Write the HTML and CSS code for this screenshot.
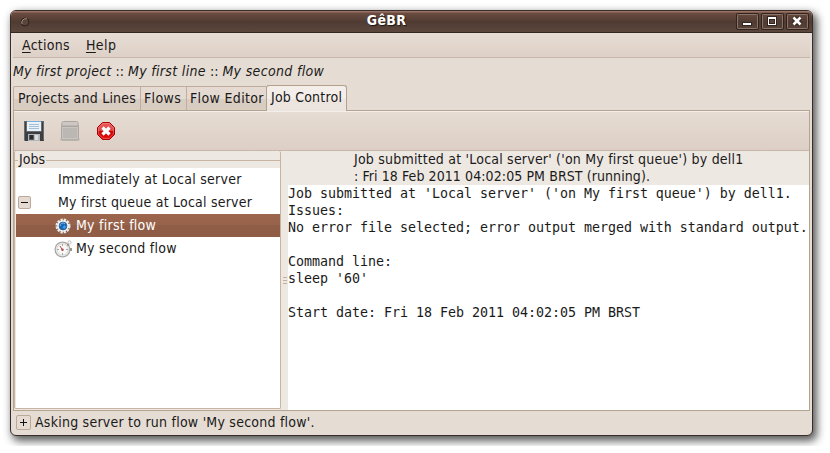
FILE: index.html
```
<!DOCTYPE html>
<html lang="en">
<head>
<meta charset="utf-8">
<title>GêBR</title>
<link rel="stylesheet" href="styles.css">
</head>
<body>
<div class="window">
  <header class="titlebar">
    <svg class="window-menu" width="10" height="10" viewBox="0 0 10 10"><circle cx="5" cy="5" r="4" fill="#5b453b" stroke="#2d211c"/><path d="M2 7A4 4 0 0 1 7 1.8" fill="none" stroke="#a58c80"/></svg>
    <span class="title">GêBR</span>
    <div class="window-buttons">
      <svg width="23" height="17" viewBox="0 0 23 17"><rect x=".5" y=".5" width="22" height="16" rx="1" fill="none" stroke="#30231e"/><rect x="1.5" y="1.5" width="20" height="14" rx="1" fill="none" stroke="#8b746a"/><path d="M6 9h10v4H6z" fill="#33251f"/><path d="M7 10h8v2H7z" fill="#fff"/></svg>
      <svg width="23" height="17" viewBox="0 0 23 17"><rect x=".5" y=".5" width="22" height="16" rx="1" fill="none" stroke="#30231e"/><rect x="1.5" y="1.5" width="20" height="14" rx="1" fill="none" stroke="#8b746a"/><path d="M6 3h10v10H6z" fill="#33251f"/><path d="M7 4h8v8H7zM8 6v5h6V6z" fill="#fff" fill-rule="evenodd"/><path d="M9 7h4v3H9z" fill="#5c463b"/></svg>
      <svg width="23" height="17" viewBox="0 0 23 17"><rect x=".5" y=".5" width="22" height="16" rx="1" fill="none" stroke="#30231e"/><rect x="1.5" y="1.5" width="20" height="14" rx="1" fill="none" stroke="#8b746a"/><path d="M7.5 4.500l7 7m0-7l-7 7" stroke="#33251f" stroke-width="4.600"/><path d="M7.500 4.500l7 7m0-7l-7 7" stroke="#fff" stroke-width="2.600"/></svg>
    </div>
  </header>
  <nav class="menubar"><span class="m1"><u>A</u>ctions</span><span class="m2"><u>H</u>elp</span></nav>
  <div class="path"><i class="p1">My first project</i><span>::</span><i class="p2">My first line</i><span>::</span><i class="p3">My second flow</i></div>
  <div class="tabs">
    <div class="tab t1"><span>Projects and Lines</span></div>
    <div class="tab t2"><span>Flows</span></div>
    <div class="tab t3"><span>Flow Editor</span></div>
    <div class="tab active"><span>Job Control</span></div>
  </div>
  <main class="page">
    <div class="toolbar">
      <svg width="20" height="20" viewBox="0 0 20 20"><path d="M0 1Q0 0 1 0h18q1 0 1 1v19H1l-1-1z" fill="#3c3f42"/><path d="M.5 19V.5h2v10h15V.5h2V19" fill="none" stroke="#686b6e"/><path d="M3 0h14v10H3z" fill="#e9f2fa"/><path d="M3 0h14v1H3z" fill="#79b0de"/><path d="M5 3.500h10M5 5.500h10M5 7.500h10" stroke="#a5bed3"/><path d="M4 13h12v7H4z" fill="#b4b6b7"/><path d="M5 14h5v5H5z" fill="#54585b"/><path d="M6 14h3v4H6z" fill="#272b2e"/><path d="M11 14h3v5h-3z" fill="#dadcdd"/></svg>
      <svg width="20" height="20" viewBox="0 0 20 20"><rect y="17" width="20" height="3" rx="1.5" fill="#c8beb6"/><path d="M1.500 5l.7-3.500q.2-1 1.300-1h13q1.100 0 1.300 1L18.500 5z" fill="#cdc8c3" stroke="#aaa5a0"/><path d="M1.500 5.500h17v12q0 1.500-1.500 1.500H3q-1.500 0-1.500-1.500z" fill="#bbb7b3" stroke="#aba6a1"/><path d="M2.500 17.500v-11h15v11z" fill="none" stroke="#c8c4c0"/></svg>
      <svg class="stop" width="20" height="20" viewBox="0 0 20 20"><defs><linearGradient id="stop" x2="0" y2="1"><stop stop-color="#eb5c5c"/><stop offset=".48" stop-color="#df4343"/><stop offset=".52" stop-color="#c90505"/><stop offset="1" stop-color="#ed0b0b"/></linearGradient></defs><path d="M6.500 1.500h7l5 5v7l-5 5h-7l-5-5v-7z" fill="url(#stop)" stroke="#a80000"/><path d="M6.900 2.600h6.200l4.300 4.300v6.200l-4.300 4.300H6.900l-4.300-4.300V6.900z" fill="none" stroke="#f79191" stroke-width=".5"/><path d="M6.500 6.500l7 7m0-7l-7 7" stroke="#fff" stroke-width="3.200"/></svg>
    </div>
    <div class="panes">
      <section class="jobs">
        <div class="legend"><span>Jobs</span></div>
        <div class="tree">
          <div class="row"><span class="r1">Immediately at Local server</span></div>
          <div class="row"><svg class="toggle" width="13" height="13" viewBox="0 0 13 13"><rect x=".5" y=".5" width="12" height="12" rx="1.500" fill="#e5dbd3" stroke="#bba999"/><path d="M3 6.500h7" stroke="#111"/></svg><span class="r2">My first queue at Local server</span></div>
          <div class="row child selected">
            <svg width="18" height="18" viewBox="0 0 18 18"><circle cx="9" cy="9" r="6.300" fill="none" stroke="#e6e9e9" stroke-width="2.400" stroke-dasharray="2.300 1"/><circle cx="9" cy="9" r="5.700" fill="#f4f5f5"/><circle cx="9" cy="9" r="3.900" fill="#1767bb" stroke="#2b588b" stroke-width=".8"/><path d="M6 9a3 3 0 0 1 5-2.200" stroke="#81b7e5" fill="none"/><path d="M8.500 10.500l2-2.500 1.500 2-1.500 2z" fill="#4c9ce0"/></svg>
            <span class="r3">My first flow</span>
          </div>
          <div class="row child">
            <svg width="18" height="18" viewBox="0 0 18 18"><circle cx="8.500" cy="9.500" r="7.400" fill="#f5f5f3" stroke="#aaa9a7" stroke-width="1.300"/><circle cx="8.500" cy="9.500" r="5.700" fill="#f8f8f6" stroke="#d2d2cf"/><circle cx="15.500" cy="2.500" r="1.600" fill="#fff" stroke="#bbb"/><path d="M17 8v3M13.500 4.500l1 1" stroke="#777" stroke-width="1.500"/><path d="M8.500 10L6 6" stroke="#bd4545"/><circle cx="8.500" cy="9.800" r="1.200" fill="#b04444"/><path d="M8.500 4v2M3 9.500h2M12 9.500h2M8.500 15v-2" stroke="#aaa"/></svg>
            <span class="r4">My second flow</span>
          </div>
        </div>
      </section>
      <div class="splitter"><i></i><i></i><i></i></div>
      <section class="details">
        <div class="summary"><div><span class="s1">Job submitted at 'Local server' ('on My first queue') by dell1</span></div><div><span class="s2">: Fri 18 Feb 2011 04:02:05 PM BRST (running).</span></div></div>
        <pre>Job submitted at 'Local server' ('on My first queue') by dell1.
Issues:
No error file selected; error output merged with standard output.

Command line:
sleep '60'

Start date: Fri 18 Feb 2011 04:02:05 PM BRST</pre>
      </section>
    </div>
  </main>
  <footer class="status"><svg width="15" height="15" viewBox="0 0 15 15"><rect x=".5" y=".5" width="14" height="14" rx="1.500" fill="#e5dbd3" stroke="#bba999"/><path d="M4 7.500h7M7.500 4v7" stroke="#111"/></svg><span class="status-text">Asking server to run flow 'My second flow'.</span></footer>
</div>
</body>
</html>
```
FILE: styles.css
```
* { box-sizing: border-box; }
body { margin: 0; padding: 10px; background: #fff; color: #1a1a1a; font: 14px/17px "DejaVu Sans Condensed", "DejaVu Sans", sans-serif; overflow: hidden; white-space: nowrap; }
.window { width: 803px; height: 426px; border: 1px solid #392d29; border-radius: 6px; background: #e5dcd3; box-shadow: 3px 4px 8px 1px rgba(0,0,0,.65); overflow: hidden; display: flex; flex-direction: column; }
.titlebar { height: 22px; flex: none; border-bottom: 1px solid #342722; background: linear-gradient(#987365 0, #987365 1px, #6b4b3f 2px, #4f3b32 11px, #5b463c 20px); display: grid; grid-template-columns: 85px 1fr 85px; align-items: center; }
.window-menu { margin-left: 9px; }
.title { color: #fff; font: bold 14px/17px "DejaVu Sans Condensed", "DejaVu Sans", sans-serif; letter-spacing: .3px; text-align: center; text-shadow: 1px 1px 1px #1d1410; padding: 0 50px 2px 0; }
.window-buttons { display: flex; gap: 2px; margin-left: 9px; }
.menubar { height: 25px; flex: none; margin: 0 2px; padding: 4px 9px; display: flex; gap: 16px; border-bottom: 1px solid #c8b6ab; background: linear-gradient(#e7ddd4, #ddd0c7); }
.menubar u { text-underline-offset: 2px; text-decoration-thickness: 1px; }
.m1 { letter-spacing: .28px; }
.m2 { letter-spacing: .4px; }
.path { height: 28px; flex: none; padding: 5px 2px; display: flex; gap: 4px; }
.p1 { letter-spacing: .22px; }
.p2, .p3 { letter-spacing: .33px; }
.tabs { display: flex; align-items: flex-end; height: 25px; flex: none; margin: 0 2px; border-bottom: 1px solid #b5a490; }
.tab { height: 24px; border: 1px solid #c0ad9d; border-right: 0; border-bottom: 0; padding: 3px 0 0 4px; background: linear-gradient(#e4dad1 50%, #d9ccc1 51%); }
.t1 { width: 127px; border-radius: 2px 0 0; letter-spacing: .22px; }
.t2 { width: 46px; padding-left: 3px; letter-spacing: .35px; }
.t3 { width: 80px; padding-left: 3px; letter-spacing: .35px; }
.tab.active { width: 81px; height: 26px; margin-bottom: -1px; border: 1px solid #b5a08c; border-bottom: 0; border-radius: 3px 3px 0 0; background: linear-gradient(#f3eee9 50%, #ece5df 51%); letter-spacing: .2px; }
.page { height: 300px; flex: none; margin: 0 2px; border: 1px solid #b5a490; border-top: 0; background: #eee8e2; display: flex; flex-direction: column; }
.toolbar { height: 40px; flex: none; padding: 9px 10px; border-top: 1px solid #f4efea; border-bottom: 1px solid #c8b6ab; background: linear-gradient(#e6dcd3, #ddcfc5); display: flex; gap: 16px; }
.panes { display: flex; flex: 1; min-height: 0; }
.jobs { width: 267px; height: 258px; flex: none; border: 1px solid #c8b4a3; border-top: 0; border-radius: 2px; }
.legend { height: 17px; display: flex; align-items: center; }
.legend span { padding: 0 1px; }
.legend::before, .legend::after { content: ""; height: 1px; background: #c8b4a3; margin-top: 2px; }
.legend::before { width: 3px; }
.legend::after { flex: 1; }
.tree { height: 240px; background: #fff; margin-left: 1px; }
.row { height: 23px; display: flex; align-items: center; padding-left: 42px; }
.toggle { margin-left: -40px; margin-right: 27px; }
.child { padding-left: 38px; gap: 4px; }
.r1 { letter-spacing: .29px; }
.r2 { letter-spacing: .22px; }
.r3, .r4 { letter-spacing: .25px; }
.selected { color: #fff; background: linear-gradient(#9b654c 0, #98634b 48%, #8f5c46 49%, #8f5c46 100%); }
.splitter { width: 7px; flex: none; padding: 126px 1px 0 2px; display: flex; flex-direction: column; gap: 2px; }
.splitter i { height: 1px; background: #c0b0a2; }
.details { flex: 1; min-width: 0; background: #fff; }
.summary { height: 34px; padding-left: 66px; background: #eee8e2; }
.s1 { letter-spacing: .21px; }
.s2 { letter-spacing: .09px; }
pre { margin: 0; font: 13.333px/17px "DejaVu Sans Mono", monospace; letter-spacing: -.027px; }
.status { height: 23px; padding-left: 5px; display: flex; align-items: center; gap: 4px; }
.status-text { letter-spacing: .235px; }
```
